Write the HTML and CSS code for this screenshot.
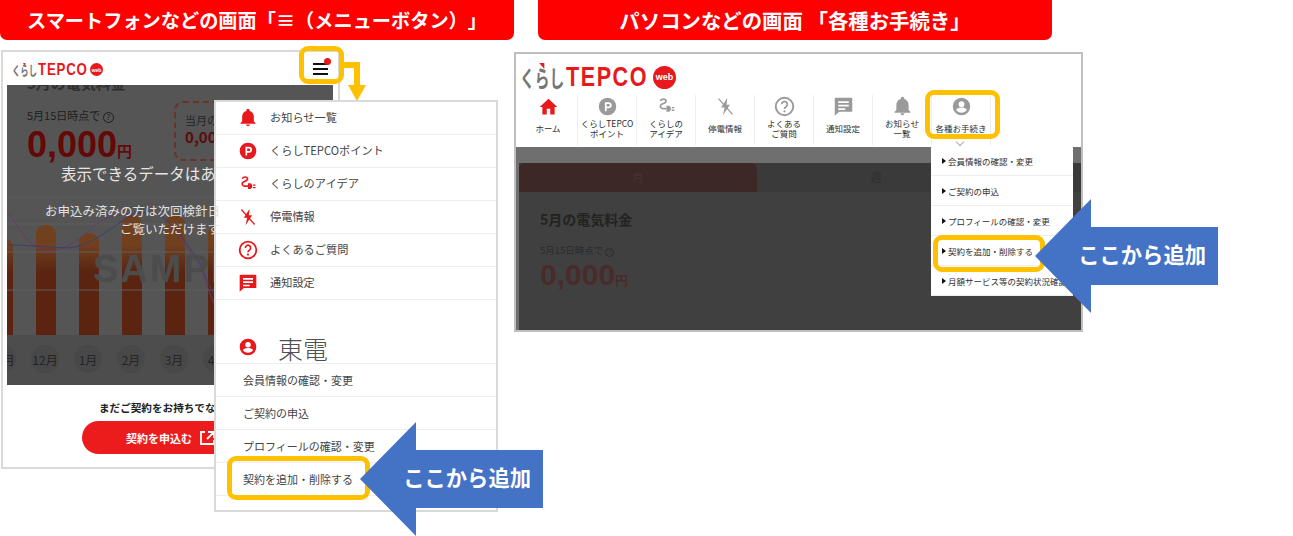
FILE: index.html
```html
<!DOCTYPE html>
<html lang="ja">
<head>
  <meta charset="UTF-8" />
  <title>メニュー案内</title>
  <link rel="stylesheet" href="styles.css">
</head>
<body>
  <svg class="defs" width="0" height="0" aria-hidden="true">
    <symbol id="i-bell" viewBox="0 0 24 24"><path d="M12 22a2.2 2.2 0 0 0 2.2-2.2H9.800A2.200 2.200 0 0 0 12 22zm7-6v-5.500c0-3.400-1.800-6.200-5-7V2.800a2 2 0 0 0-4 0v.7c-3.200.8-5 3.600-5 7V16l-2 2v1h18v-1z"/></symbol>
    <symbol id="i-point" viewBox="0 0 24 24"><path fill-rule="evenodd" d="M12 2a10 10 0 1 0 0 20 10 10 0 0 0 0-20zM9 7h4.300a3.500 3.500 0 0 1 0 7H11v3.500H9zm2 2v3h2.200a1.500 1.500 0 0 0 0-3z"/></symbol>
    <symbol id="i-plug" viewBox="0 0 24 24"><path d="M5 5.500c1.500-2.500 6-2.500 6.500 0 .4 2.200-3 3-5 4-2 1-2 3.500 0 4.500 1.500.7 4 .5 5.500.5" fill="none" stroke="currentColor" stroke-width="2"/><path d="M12 11h3l2 2v3l-2 2h-3z"/><path d="M18 12.500h3v1.500h-3zM18 15.500h3V17h-3z"/></symbol>
    <symbol id="i-outage" viewBox="0 0 24 24"><path d="M14 2 7 13h4l-2 9 8-12h-4z"/><path d="M4 3l16 18" fill="none" stroke="currentColor" stroke-width="1.500"/></symbol>
    <symbol id="i-help" viewBox="0 0 24 24"><circle cx="12" cy="12" r="10" fill="none" stroke="currentColor" stroke-width="2.200"/><path d="M8.800 9.500a3.200 3.200 0 1 1 4.900 2.700c-1.100.7-1.700 1.300-1.700 2.600" fill="none" stroke="currentColor" stroke-width="2"/><circle cx="12" cy="17.500" r="1.300"/></symbol>
    <symbol id="i-chat" viewBox="0 0 24 24"><path fill-rule="evenodd" d="M3 2h18a1 1 0 0 1 1 1v14a1 1 0 0 1-1 1H7l-5 4.500V3a1 1 0 0 1 1-1zm3 4v2h12V6zm0 4v2h12v-2zm0 4v2h8v-2z"/></symbol>
    <symbol id="i-user" viewBox="0 0 24 24"><path fill-rule="evenodd" d="M12 2a10 10 0 1 0 0 20 10 10 0 0 0 0-20zm0 4a3.300 3.300 0 1 1 0 6.600A3.300 3.300 0 0 1 12 6zm0 13c-2.600 0-4.800-1.200-6-3 .1-1.800 4-2.800 6-2.800s5.900 1 6 2.800c-1.200 1.800-3.400 3-6 3z"/></symbol>
    <symbol id="i-home" viewBox="0 0 24 24"><path d="M10 21v-6.500h4V21h5v-8.500h3L12 3 2 12.500h3V21z"/></symbol>
  </svg>

  <div class="canvas">
    <div class="banner banner-sp">スマートフォンなどの画面「≡（メニューボタン）」</div>
    <div class="banner banner-pc">パソコンなどの画面 「各種お手続き」</div>

    <!-- スマートフォン -->
    <div class="phone">
      <div class="phone-head">
        <div class="logo logo-sm"><span class="logo-kana">くらし</span><span class="logo-en">TEPCO</span><span class="logo-web">web</span></div>
        <div class="burger"><i></i><i></i><i></i></div>
      </div>
      <div class="phone-screen">
        <div class="screen-title">5月の電気料金</div>
        <div class="screen-top">
          <div>
            <div class="as-of">5月15日時点で <span class="q">?</span></div>
            <div class="price">0,000<small>円</small></div>
          </div>
          <div class="dash-box">
            <div class="dash-label">当月の</div>
            <div class="dash-val">0,00</div>
          </div>
        </div>
        <div class="no-data">表示できるデータはあ</div>
        <div class="no-data-sub">お申込み済みの方は次回検針日</div>
        <div class="no-data-sub no-data-sub2">ご覧いただけます</div>
        <div class="bars">
          <i class="bar bar-a"></i><i class="bar bar-b"></i><i class="bar bar-c"></i><i class="bar bar-d"></i><i class="bar bar-d"></i><i class="bar bar-b"></i><i class="bar bar-c"></i>
        </div>
        <svg class="lines" width="326" height="140" viewBox="0 0 326 140">
          <path d="M0 2H326M0 29H326M0 57H326M0 95H326" fill="none" stroke="#5f5f5f" stroke-width="1"/>
          <path d="M1 17C12 32 20 48 30 53 40 58 55 56 70 45 85 35 92 24 103 22 125 18 145 14 156 22 172 36 182 56 193 72 198 85 202 98 207 108" fill="none" stroke="#6d3a63" stroke-width="1"/>
          <path d="M1 50C20 50 40 52 60 53 90 52 115 20 133 18 142 17 150 18 156 22 172 36 182 52 193 68 198 80 202 92 207 100" fill="none" stroke="#3d3d70" stroke-width="1"/>
        </svg>
        <div class="sample">SAMPLE</div>
        <div class="months">
          <span class="month month-cut">11月</span><span class="month">12月</span><span class="month">1月</span><span class="month">2月</span><span class="month">3月</span><span class="month">4月</span>
        </div>
      </div>
      <div class="phone-foot">
        <p class="foot-text">まだご契約をお持ちでな</p>
        <div class="apply-btn">契約を申込む
          <svg class="ext" width="15" height="14" viewBox="0 0 15 14"><path d="M5 1H1v12h13V9M8 1h6v6M14 1 7 8" fill="none" stroke="#fff" stroke-width="1.800"/></svg>
        </div>
      </div>
    </div>

    <div class="mark mark-burger"></div>
    <svg class="connector" width="24" height="44" viewBox="0 0 24 44"><path d="M0 4h16v23h6l-9 16-9-16h6V10H0z" fill="#ffc000"/></svg>

    <div class="sp-menu">
      <a class="menu-row"><svg class="ico"><use href="#i-bell"/></svg>お知らせ一覧</a>
      <a class="menu-row"><svg class="ico"><use href="#i-point"/></svg>くらしTEPCOポイント</a>
      <a class="menu-row"><svg class="ico"><use href="#i-plug"/></svg>くらしのアイデア</a>
      <a class="menu-row"><svg class="ico"><use href="#i-outage"/></svg>停電情報</a>
      <a class="menu-row"><svg class="ico"><use href="#i-help"/></svg>よくあるご質問</a>
      <a class="menu-row"><svg class="ico"><use href="#i-chat"/></svg>通知設定</a>
      <div class="menu-user"><svg class="ico"><use href="#i-user"/></svg><span class="user-name">東電</span></div>
      <a class="menu-sub">会員情報の確認・変更</a>
      <a class="menu-sub">ご契約の申込</a>
      <a class="menu-sub">プロフィールの確認・変更</a>
      <a class="menu-sub">契約を追加・削除する</a>
    </div>

    <div class="mark mark-sp-add"></div>
    <div class="callout callout-sp">ここから追加</div>

    <!-- パソコン -->
    <div class="pc">
      <div class="pc-head">
        <div class="logo logo-lg"><span class="logo-kana">くらし</span><span class="logo-en">TEPCO</span><span class="logo-web">web</span></div>
        <nav class="pc-nav">
          <a class="nav-item nav-home"><svg class="nav-ico"><use href="#i-home"/></svg><span>ホーム</span></a>
          <a class="nav-item"><svg class="nav-ico"><use href="#i-point"/></svg><span>くらしTEPCO<br>ポイント</span></a>
          <a class="nav-item"><svg class="nav-ico"><use href="#i-plug"/></svg><span>くらしの<br>アイデア</span></a>
          <a class="nav-item"><svg class="nav-ico"><use href="#i-outage"/></svg><span>停電情報</span></a>
          <a class="nav-item"><svg class="nav-ico"><use href="#i-help"/></svg><span>よくある<br>ご質問</span></a>
          <a class="nav-item"><svg class="nav-ico"><use href="#i-chat"/></svg><span>通知設定</span></a>
          <a class="nav-item"><svg class="nav-ico"><use href="#i-bell"/></svg><span>お知らせ<br>一覧</span></a>
          <a class="nav-item"><svg class="nav-ico"><use href="#i-user"/></svg><span>各種お手続き</span></a>
        </nav>
      </div>
      <div class="pc-screen">
        <div class="tabs">
          <div class="tab tab-on">月</div>
          <div class="tab">週</div>
        </div>
        <div class="pc-title">5月の電気料金</div>
        <div class="pc-asof">5月15日時点で <span class="q q-sm">?</span></div>
        <div class="pc-price">0,000<small>円</small></div>
      </div>
      <div class="pc-drop">
        <a class="drop-row">会員情報の確認・変更</a>
        <a class="drop-row">ご契約の申込</a>
        <a class="drop-row">プロフィールの確認・変更</a>
        <a class="drop-row">契約を追加・削除する</a>
        <a class="drop-row">月額サービス等の契約状況確認</a>
      </div>
      <i class="chevron"></i>
    </div>

    <div class="mark mark-nav"></div>
    <div class="mark mark-pc-add"></div>
    <div class="callout callout-pc">ここから追加</div>
  </div>
</body>
</html>
```

FILE: styles.css
```css
* {
  box-sizing: border-box;
}

html, body {
  margin: 0;
  background: #fff;
}

body {
  font-family: "Noto Sans CJK JP", "Noto Sans", sans-serif;
  color: #444;
  text-spacing-trim: space-all;
}

.defs {
  position: absolute;
}

/* the slide is a free canvas: each screenshot and marker sits where it was pasted */
.canvas {
  position: relative;
  width: 1293px;
  height: 536px;
  overflow: hidden;
}

.banner {
  position: absolute;
  top: 0;
  width: 514px;
  height: 40px;
  border-radius: 0 0 7px 7px;
  background: #f00;
  color: #fff;
  font-weight: 700;
  line-height: 40px;
  text-align: center;
  white-space: nowrap;
}

.banner-sp { left: 0; font-size: 19.200px; }
.banner-pc { left: 538px; font-size: 20.400px; }

/* logo: the wordmark is condensed, so both parts are squeezed from the left */
.logo {
  display: flex;
  align-items: center;
  font-family: "Liberation Sans", sans-serif;
  white-space: nowrap;
}

.logo-kana,
.logo-en {
  flex: none;
  transform-origin: left center;
}

.logo-kana {
  position: relative;
  font-family: "Noto Sans CJK JP", sans-serif;
  font-weight: 700;
  color: #757575;
}

.logo-kana::after {
  content: "";
  position: absolute;
  border-top-style: solid;
  border-top-color: #e8191c;
  border-left-style: solid;
  border-left-color: transparent;
}

.logo-en {
  color: #e8191c;
  font-weight: 700;
}

.logo-web {
  display: flex;
  align-items: center;
  justify-content: center;
  flex: none;
  border-radius: 50%;
  background: #e8191c;
  color: #fff;
  font-weight: 700;
}

.logo-sm { margin-top: 2px; }
.logo-sm .logo-kana { width: 39px; margin-right: -13px; font-size: 13px; transform: scaleX(.64); }
.logo-sm .logo-kana::after { left: 17px; top: 3px; border-top-width: 3px; border-left-width: 4px; }
.logo-sm .logo-en { width: 63px; margin-right: -11px; font-size: 17px; letter-spacing: 1px; transform: scaleX(.78); }
.logo-sm .logo-web { width: 13px; height: 13px; font-size: 5px; }

.logo-lg .logo-kana { width: 69px; margin-right: -23px; font-size: 23px; transform: scaleX(.64); }
.logo-lg .logo-kana::after { left: 30px; top: 3px; border-top-width: 6px; border-left-width: 8px; }
.logo-lg .logo-en { width: 106px; margin-right: -19px; font-size: 28px; letter-spacing: 2px; transform: scaleX(.77); }
.logo-lg .logo-web { width: 23px; height: 23px; font-size: 9px; }

/* phone screenshot */
.phone {
  position: absolute;
  left: 1px;
  top: 50px;
  width: 339px;
  height: 419px;
  border: 2px solid #d9d9d9;
  background: #fff;
}

.phone-head {
  display: flex;
  align-items: center;
  justify-content: space-between;
  height: 33px;
  padding: 0 10px 0 9px;
}

.burger {
  position: relative;
  display: flex;
  flex-direction: column;
  gap: 3px;
  width: 15px;
}

.burger i {
  display: block;
  height: 2px;
  background: #111;
}

.burger::after {
  content: "";
  position: absolute;
  right: -3px;
  top: -5px;
  width: 7px;
  height: 7px;
  border-radius: 50%;
  background: #e8191c;
}

.phone-screen {
  position: relative;
  width: 326px;
  height: 300px;
  margin-left: 4px;
  overflow: hidden;
  background: #555;
}

.screen-title {
  margin: -13px 0 0 20px;
  height: 24px;
  color: #2f2f2f;
  font-size: 15px;
  font-weight: 700;
}

.screen-top {
  display: flex;
  gap: 42px;
  padding: 0 0 0 20px;
  height: 65px;
}

.as-of {
  margin-top: 11px;
  color: #1e1e1e;
  font-size: 11px;
}

.q {
  display: inline-flex;
  align-items: center;
  justify-content: center;
  width: 11px;
  height: 11px;
  border: 1px solid currentColor;
  border-radius: 50%;
  font-size: 8px;
  line-height: 1;
}

.price {
  margin-top: 4px;
  color: #640808;
  font-family: "Liberation Sans", sans-serif;
  font-size: 36px;
  font-weight: 700;
  line-height: 36px;
}

.price small {
  font-family: "Noto Sans CJK JP", sans-serif;
  font-size: 15px;
}

.dash-box {
  flex: none;
  width: 130px;
  height: 60px;
  margin-top: 5px;
  padding: 10px 9px 0;
  border: 2px dashed #6b3226;
  border-radius: 9px;
}

.dash-label {
  color: #242424;
  font-size: 11px;
  line-height: 15px;
}

.dash-val {
  color: #5b0b0b;
  font-size: 15px;
  font-weight: 700;
  line-height: 18px;
}

.no-data {
  padding-left: 54px;
  color: #e6e6e6;
  font-size: 15.500px;
  line-height: 24px;
  white-space: nowrap;
}

.no-data-sub {
  position: relative;
  z-index: 2;
  margin-top: 17px;
  padding-left: 38px;
  color: #e0e0e0;
  font-size: 12.500px;
  line-height: 18px;
  white-space: nowrap;
}

.no-data-sub2 {
  margin-top: 0;
  padding-left: 113px;
}

.bars {
  position: absolute;
  left: -14px;
  right: 0;
  top: 130px;
  height: 120px;
  display: flex;
  gap: 23px;
  align-items: flex-end;
}

.bar {
  display: block;
  width: 20px;
  border-radius: 9px 9px 0 0;
  background: linear-gradient(to top, #5a2410 0, #5a2410 62px, #70401f 90px);
}

.bar-a { height: 97px; }
.bar-b { height: 110px; }
.bar-c { height: 102px; }
.bar-d { height: 120px; }

.lines {
  position: absolute;
  left: 0;
  top: 110px;
}

.sample {
  position: absolute;
  left: 86px;
  top: 163px;
  color: #4c4c4c;
  font-family: "Liberation Sans", sans-serif;
  font-size: 38px;
  font-weight: 700;
  letter-spacing: 2px;
}

.months {
  position: absolute;
  left: -8px;
  top: 250px;
  width: 334px;
  height: 50px;
  display: flex;
  gap: 15px;
  align-items: center;
  padding-bottom: 2px;
  background: #4d4d4d;
}

.month {
  display: flex;
  align-items: center;
  justify-content: center;
  flex: none;
  width: 28px;
  height: 28px;
  border-radius: 50%;
  background: #484848;
  color: #242424;
  font-size: 12px;
  white-space: nowrap;
}

.month-cut {
  margin-left: -11px;
}

.phone-foot {
  display: flex;
  flex-direction: column;
  align-items: center;
  padding-top: 15px;
  padding-right: 3px;
}

.foot-text {
  align-self: flex-start;
  margin: 0 0 5px 96px;
  color: #222;
  font-size: 10.600px;
  font-weight: 700;
  line-height: 16px;
  white-space: nowrap;
}

.apply-btn {
  display: flex;
  align-items: center;
  justify-content: center;
  gap: 8px;
  width: 174px;
  height: 33px;
  padding-left: 3px;
  border-radius: 17px;
  background: #ed1c1c;
  color: #fff;
  font-size: 11px;
  font-weight: 700;
}

/* phone menu */
.sp-menu {
  position: absolute;
  left: 214px;
  top: 100px;
  width: 284px;
  height: 412px;
  border: 2px solid #d9d9d9;
  background: #fff;
}

.menu-row {
  display: flex;
  align-items: center;
  height: 33px;
  padding-left: 22px;
  border-bottom: 1px solid #eee;
  font-size: 11.200px;
  line-height: 1;
}

.ico {
  flex: none;
  width: 20px;
  height: 20px;
  margin-right: 12px;
  color: #e8191c;
  fill: currentColor;
}

.menu-user {
  display: flex;
  align-items: flex-end;
  height: 64px;
  padding-left: 22px;
  border-bottom: 1px solid #eee;
}

.menu-user .ico {
  margin-right: 20px;
  margin-bottom: 6px;
}

.user-name {
  color: #505050;
  font-size: 25px;
  font-weight: 300;
  line-height: 29px;
}

.menu-sub {
  display: flex;
  align-items: center;
  height: 33px;
  padding-left: 27px;
  border-bottom: 1px solid #eee;
  font-size: 11px;
}

/* yellow markers */
.mark {
  position: absolute;
  border: 5px solid #ffc000;
  border-radius: 9px;
}

.mark-burger { left: 299px; top: 46px; width: 45px; height: 38px; }
.mark-sp-add { left: 227px; top: 456px; width: 143px; height: 44px; }
.mark-nav { left: 925px; top: 90px; width: 75px; height: 49px; }
.mark-pc-add { left: 933px; top: 235px; width: 112px; height: 37px; }

.connector {
  position: absolute;
  left: 344px;
  top: 58px;
}

/* blue arrows */
.callout {
  position: absolute;
  display: flex;
  align-items: center;
  justify-content: flex-end;
  height: 114px;
  padding: 0 12px 5px 0;
  background: #4472c4;
  clip-path: polygon(0 50%, 56px 0, 56px 28px, 100% 28px, 100% 86px, 56px 86px, 56px 100%);
  color: #fff;
  font-size: 21.300px;
  font-weight: 700;
  white-space: nowrap;
}

.callout-sp { left: 360px; top: 422px; width: 183px; }
.callout-pc { left: 1035px; top: 199px; width: 183px; }

/* pc screenshot */
.pc {
  position: absolute;
  left: 514px;
  top: 52px;
  width: 569px;
  height: 280px;
  border: 2px solid #bfbfbf;
  overflow: hidden;
  background: #6f6f6f;
}

.pc-head {
  height: 93px;
  padding: 10px 0 0 3px;
  background: #fff;
}

.logo-lg {
  height: 26px;
  margin-left: 1px;
}

.pc-nav {
  display: flex;
  height: 51px;
  margin-top: 5px;
}

.nav-item {
  display: flex;
  flex-direction: column;
  align-items: center;
  width: 59px;
  height: 50px;
  border-right: 1px solid #eee;
  color: #2e2e2e;
  font-size: 8.500px;
  line-height: 10px;
  text-align: center;
  white-space: nowrap;
}

.nav-item span {
  display: flex;
  flex: none;
  align-items: center;
  height: 21px;
}

.nav-ico {
  flex: none;
  width: 21px;
  height: 21px;
  margin-top: 1px;
  color: #9a9a9a;
  fill: currentColor;
}

.nav-home .nav-ico {
  color: #e8191c;
}

.pc-screen {
  height: 183px;
  margin-left: 3px;
  padding-top: 16px;
}

.tabs {
  display: flex;
  height: 29px;
  background: #3a3a3a;
}

.tab {
  width: 238px;
  color: #2e2e2e;
  font-size: 11px;
  line-height: 29px;
  text-align: center;
}

.tab-on {
  border-radius: 6px 6px 0 0;
  background: #3d2828;
  color: #4d3232;
}

.pc-title {
  padding: 17px 0 0 21px;
  background: #404040;
  color: #232323;
  font-size: 14px;
  font-weight: 700;
  line-height: 20px;
}

.pc-asof {
  padding: 14px 0 0 21px;
  background: #404040;
  color: #2b2b2b;
  font-size: 9.500px;
  line-height: 14px;
}

.q-sm {
  width: 9px;
  height: 9px;
  font-size: 6px;
}

.pc-price {
  height: 80px;
  padding-left: 21px;
  background: #404040;
  color: #4a2b2b;
  font-family: "Liberation Sans", sans-serif;
  font-size: 30px;
  font-weight: 700;
  line-height: 36px;
}

.pc-price small {
  font-family: "Noto Sans CJK JP", sans-serif;
  font-size: 13px;
}

.pc-drop {
  position: absolute;
  left: 415px;
  top: 92px;
  width: 142px;
  height: 150px;
  background: #fff;
}

.drop-row {
  display: flex;
  align-items: center;
  height: 30px;
  padding-left: 11px;
  border-bottom: 1px solid #eee;
  color: #2e2e2e;
  font-size: 8.500px;
  white-space: nowrap;
  overflow: hidden;
}

.drop-row::before {
  content: "";
  flex: none;
  margin-right: 2px;
  border-left: 4px solid #111;
  border-top: 3px solid transparent;
  border-bottom: 3px solid transparent;
}

.chevron {
  position: absolute;
  left: 441px;
  top: 85px;
  width: 6px;
  height: 6px;
  border-right: 1px solid #aaa;
  border-bottom: 1px solid #aaa;
  transform: rotate(45deg);
}
```
